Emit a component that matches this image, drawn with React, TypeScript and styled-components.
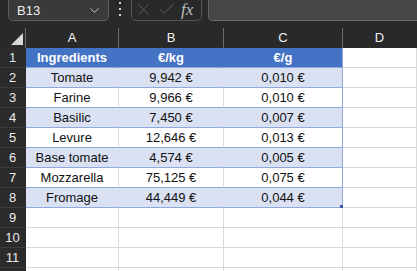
import styled, { createGlobalStyle } from "styled-components";
import { ChevronDown, X, Check } from "lucide-react";

const GlobalStyle = createGlobalStyle`
  body {
    margin: 0;
    background: #292929;
    font-family: "Liberation Sans", Arial, sans-serif;
    overflow: hidden;
  }
`;

const Toolbar = styled.div`
  height: 28px;
  display: flex;
  align-items: flex-end;
  padding: 0 0 7px 8px;
  box-sizing: border-box;
  overflow: hidden;
`;

const NameBox = styled.div`
  width: 101px;
  height: 28px;
  flex-shrink: 0;
  box-sizing: border-box;
  background: #3a3a3a;
  border: 1px solid #5f5f5f;
  border-radius: 5px;
  display: flex;
  align-items: flex-end;
  justify-content: space-between;
  padding: 0 6px 2px 8px;
  color: #f0f0f0;
  font-size: 13px;
`;

const Dots = styled.div`
  width: 22px;
  height: 14px;
  flex-shrink: 0;
  display: flex;
  flex-direction: column;
  align-items: center;
  justify-content: space-between;
  margin-bottom: 5px;
  span {
    width: 2px;
    height: 2px;
    background: #cfcfcf;
  }
`;

const IconBox = styled.div`
  width: 71px;
  height: 28px;
  flex-shrink: 0;
  box-sizing: border-box;
  border: 1px solid #555;
  border-radius: 5px;
  display: flex;
  align-items: flex-end;
  gap: 4px;
  padding: 0 0 1px 2px;
  color: #666;
`;

const Fx = styled.span`
  font-family: "Liberation Serif", serif;
  font-style: italic;
  font-size: 17px;
  line-height: 18px;
  color: #bdbdbd;
  margin-left: 1px;
`;

const FormulaBox = styled.div`
  flex: 1;
  height: 28px;
  margin-left: 6px;
  box-sizing: border-box;
  background: #464646;
  border: 1px solid #666;
  border-right: none;
  border-radius: 5px 0 0 5px;
`;

const Sheet = styled.div`
  display: grid;
  grid-template-columns: 26px 93px 105px 119px 1fr;
  grid-auto-rows: 20px;
  font-size: 13px;
`;

const ColHead = styled.div<{ $first?: boolean; $end?: boolean }>`
  box-sizing: border-box;
  background: #292929;
  color: #f2f2f2;
  display: flex;
  align-items: center;
  justify-content: center;
  border-right: 1px solid ${(p) => (p.$end ? "#292929" : "#6c6c6c")};
  border-bottom: 1px solid #292929;
`;

const Corner = styled.div`
  width: 0;
  height: 0;
  border-left: 12px solid transparent;
  border-bottom: 12px solid #d8d8d8;
  margin-left: 8px;
  margin-top: 2px;
`;

const RowHead = styled.div<{ $active?: boolean }>`
  box-sizing: border-box;
  background: #2b2b2b;
  color: ${(p) => (p.$active ? "#d4e3f7" : "#ececec")};
  display: flex;
  align-items: center;
  justify-content: center;
  border-right: 1px solid #2b2b2b;
  border-bottom: 1px solid #3d3d3d;
`;

type Kind = "head" | "band" | "plain" | "empty";

const fills: Record<Kind, string> = {
  head: "#4472c4",
  band: "#d9e1f2",
  plain: "#ffffff",
  empty: "#ffffff",
};

const Cell = styled.div<{ $kind: Kind; $last?: boolean }>`
  box-sizing: border-box;
  position: relative;
  background: ${(p) => fills[p.$kind]};
  color: ${(p) => (p.$kind === "head" ? "#ffffff" : "#111")};
  font-weight: ${(p) => (p.$kind === "head" ? 700 : 400)};
  display: flex;
  align-items: center;
  justify-content: center;
  white-space: nowrap;
  border-right: 1px solid
    ${(p) =>
      p.$last
        ? "#8ea9db"
        : p.$kind === "empty" || p.$kind === "plain"
        ? "#d9d9d9"
        : fills[p.$kind]};
  border-bottom: 1px solid
    ${(p) => (p.$kind === "empty" ? "#d9d9d9" : "#8ea9db")};
`;

const Handle = styled.span`
  position: absolute;
  right: -2px;
  bottom: -2px;
  width: 4px;
  height: 4px;
  background: #3a5bb0;
`;

const rows: [string, string, string][] = [
  ["Tomate", "9,942 €", "0,010 €"],
  ["Farine", "9,966 €", "0,010 €"],
  ["Basilic", "7,450 €", "0,007 €"],
  ["Levure", "12,646 €", "0,013 €"],
  ["Base tomate", "4,574 €", "0,005 €"],
  ["Mozzarella", "75,125 €", "0,075 €"],
  ["Fromage", "44,449 €", "0,044 €"],
];

export default function App() {
  return (
    <>
      <GlobalStyle />
      <Toolbar>
        <NameBox>
          <span>B13</span>
          <ChevronDown size={15} color="#cfcfcf" strokeWidth={1.5} />
        </NameBox>
        <Dots>
          <span />
          <span />
          <span />
        </Dots>
        <IconBox>
          <X size={19} strokeWidth={1.1} />
          <Check size={19} strokeWidth={1.1} />
          <Fx>fx</Fx>
        </IconBox>
        <FormulaBox />
      </Toolbar>
      <Sheet>
        <ColHead>
          <Corner />
        </ColHead>
        <ColHead>A</ColHead>
        <ColHead>B</ColHead>
        <ColHead>C</ColHead>
        <ColHead $end>D</ColHead>

        <RowHead $active>1</RowHead>
        <Cell $kind="head">Ingredients</Cell>
        <Cell $kind="head">€/kg</Cell>
        <Cell $kind="head" $last>
          €/g
        </Cell>
        <Cell $kind="empty" />

        {rows.map(([name, kg, g], i) => {
          const kind: Kind = i % 2 === 0 ? "band" : "plain";
          return [
            <RowHead key={`h${i}`}>{i + 2}</RowHead>,
            <Cell key={`a${i}`} $kind={kind}>
              {name}
            </Cell>,
            <Cell key={`b${i}`} $kind={kind}>
              {kg}
            </Cell>,
            <Cell key={`c${i}`} $kind={kind} $last>
              {g}
              {i === rows.length - 1 && <Handle />}
            </Cell>,
            <Cell key={`d${i}`} $kind="empty" />,
          ];
        })}

        {[9, 10, 11, 0].map((n) => [
          <RowHead key={`h${n}`}>{n > 0 ? n : ""}</RowHead>,
          <Cell key={`a${n}`} $kind="empty" />,
          <Cell key={`b${n}`} $kind="empty" />,
          <Cell key={`c${n}`} $kind="empty" />,
          <Cell key={`d${n}`} $kind="empty" />,
        ])}
      </Sheet>
    </>
  );
}
